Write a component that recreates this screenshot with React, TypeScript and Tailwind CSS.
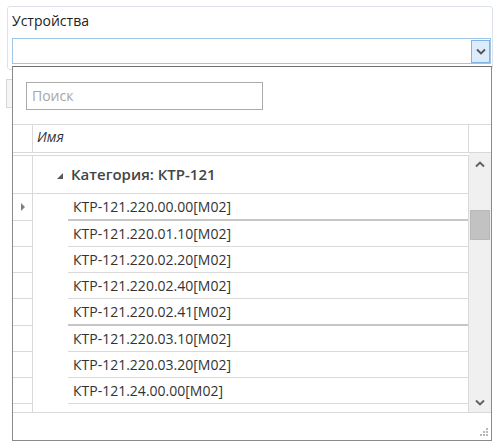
import React from 'react';

type DeviceRow = { name: string; current?: boolean; thick?: boolean };

const devices: DeviceRow[] = [
  { name: 'КТР-121.220.00.00[M02]', current: true, thick: true },
  { name: 'КТР-121.220.01.10[M02]' },
  { name: 'КТР-121.220.02.20[M02]' },
  { name: 'КТР-121.220.02.40[M02]' },
  { name: 'КТР-121.220.02.41[M02]', thick: true },
  { name: 'КТР-121.220.03.10[M02]' },
  { name: 'КТР-121.220.03.20[M02]' },
  { name: 'КТР-121.24.00.00[M02]' },
];

const Chevron: React.FC<{ up?: boolean; color?: string }> = ({ up, color = '#555' }) => (
  <svg width="10" height="7" viewBox="0 0 10 7">
    <path
      d={up ? 'M1 5.5 L5 1.5 L9 5.5' : 'M1 1.5 L5 5.5 L9 1.5'}
      fill="none"
      stroke={color}
      strokeWidth="1.9"
    />
  </svg>
);

const ResizeGrip = () => (
  <svg width="9" height="9" viewBox="0 0 9 9">
    {[
      [6, 0],
      [3, 3],
      [6, 3],
      [0, 6],
      [3, 6],
      [6, 6],
    ].map(([x, y]) => (
      <rect key={`${x}-${y}`} x={x} y={y} width="2" height="2" fill="#b8b8b8" />
    ))}
  </svg>
);

function DeviceRowView({ row }: { row: DeviceRow }) {
  return (
    <div className="flex">
      <div className="w-[20px] shrink-0 border-r border-b border-[#d9d9d9] flex items-center pl-[8px]">
        {row.current && (
          <svg width="4" height="8" viewBox="0 0 4 8">
            <path d="M0 0 L4 4 L0 8 Z" fill="#808080" />
          </svg>
        )}
      </div>
      <div className="w-[35px] shrink-0" />
      <div
        className={`flex-1 pl-[5px] leading-[25px] text-[#333] ${
          row.thick ? 'border-b-2 border-[#c6c6c6]' : 'border-b border-[#d9d9d9]'
        }`}
      >
        {row.name}
      </div>
    </div>
  );
}

export default function App() {
  return (
    <div className="relative w-[495px] h-[442px] bg-white overflow-hidden font-['Open_Sans',sans-serif] text-[14px]">
      <div className="pt-[6px] pl-[7px]">
        {/* field card: label + combobox */}
        <div className="w-[486px] h-[64px] border border-[#dde2e8] rounded-[3px] pt-[4px] pl-[4px] pr-[1px]">
          <div className="leading-[19px] text-[#222] mb-[8px]">Устройства</div>
          <div className="h-[26px] border border-[#9fc5e8] bg-white flex items-center justify-end">
            <div className="w-[19px] h-[23px] border border-[#7eb4ea] bg-[#dcecfc] flex items-center justify-center">
              <Chevron />
            </div>
          </div>
        </div>
        <div className="mt-[9px] -ml-[1px] w-[80px] h-[29px] border border-[#d6d6d6] bg-[#f6f6f6]" />
      </div>

      {/* dropdown popup */}
      <div className="absolute left-[12px] top-[66px] w-[480px] h-[375px] border border-[#8a8a8a] border-t-[#707070] bg-white flex flex-col">
        <div className="h-[57px] shrink-0 pt-[15px] pl-[13px]">
          <div className="w-[237px] h-[28px] border border-[#ababab] pl-[5px] leading-[26px] text-[#a6a6a6]">
            Поиск
          </div>
        </div>

        {/* header */}
        <div className="h-[29px] shrink-0 flex border-t border-b border-[#d9d9d9]">
          <div className="w-[20px] border-r border-[#d9d9d9]" />
          <div className="w-[436px] border-r border-[#d9d9d9] pl-[4px] leading-[23px] italic text-[#333]">
            Имя
          </div>
          <div className="flex-1" />
        </div>

        {/* body */}
        <div className="flex-1 flex min-h-0">
          <div className="w-[456px] pt-[2px] overflow-hidden">
            <div className="h-full border-t border-r border-[#d9d9d9] overflow-hidden">
              <div className="flex h-[38px] border-b border-[#d9d9d9]">
                <div className="w-[20px] shrink-0 border-r border-[#d9d9d9]" />
                <div className="flex-1 flex items-center pl-[24px] gap-[8px] leading-[37px] text-[15px] font-semibold text-[#444]">
                  <svg width="6" height="6" viewBox="0 0 6 6" className="mt-[2px]">
                    <path d="M6 0 L6 6 L0 6 Z" fill="#595959" />
                  </svg>
                  <span>Категория: КТР-121</span>
                </div>
              </div>
              {devices.map((d) => (
                <DeviceRowView key={d.name} row={d} />
              ))}
              <div className="flex h-[26px]">
                <div className="w-[20px] border-r border-[#d9d9d9]" />
              </div>
            </div>
          </div>
          <div className="flex-1 bg-[#f0f0f0] flex flex-col">
            <div className="h-[22px] flex items-center justify-center">
              <Chevron up color="#606060" />
            </div>
            <div className="mt-[35px] ml-[1px] w-[20px] h-[30px] bg-[#c2c2c2] border border-[#b8b8b8]" />
            <div className="flex-1" />
            <div className="h-[20px] flex items-center justify-center">
              <Chevron color="#606060" />
            </div>
          </div>
        </div>

        {/* footer with resize grip */}
        <div className="h-[28px] shrink-0 border-t border-[#d9d9d9] flex justify-end items-end pr-[2px] pb-[3px]">
          <ResizeGrip />
        </div>
      </div>
    </div>
  );
}
